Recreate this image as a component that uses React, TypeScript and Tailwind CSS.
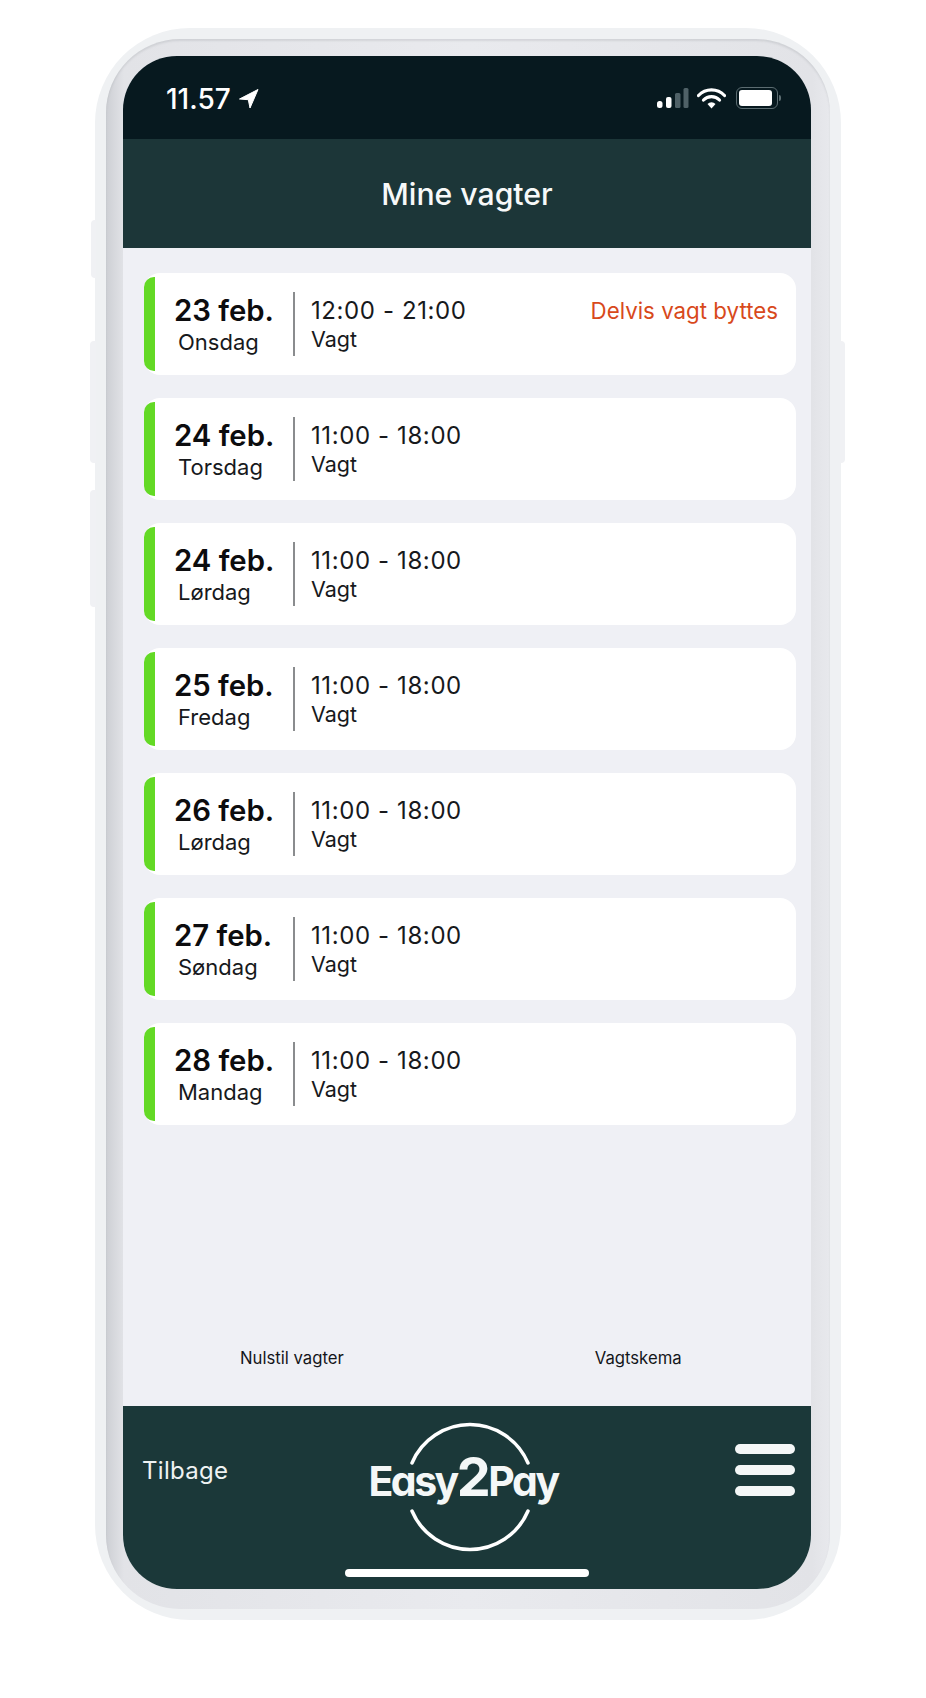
type Shift = {
  date: string;
  day: string;
  time: string;
  note?: string;
};

const shifts: Shift[] = [
  { date: "23 feb.", day: "Onsdag", time: "12:00 - 21:00", note: "Delvis vagt byttes" },
  { date: "24 feb.", day: "Torsdag", time: "11:00 - 18:00" },
  { date: "24 feb.", day: "Lørdag", time: "11:00 - 18:00" },
  { date: "25 feb.", day: "Fredag", time: "11:00 - 18:00" },
  { date: "26 feb.", day: "Lørdag", time: "11:00 - 18:00" },
  { date: "27 feb.", day: "Søndag", time: "11:00 - 18:00" },
  { date: "28 feb.", day: "Mandag", time: "11:00 - 18:00" }
];

function StatusIcons() {
  return (
    <div className="mt-[4px] flex items-center">
      <svg width="32" height="20" viewBox="0 0 32 20" aria-hidden="true">
        <rect x="0" y="13" width="5.5" height="7" rx="2.5" fill="#ffffff" />
        <rect x="9" y="9" width="5.5" height="11" rx="2" fill="#ffffff" />
        <rect x="18" y="5" width="5.5" height="15" rx="1.5" fill="#4f6167" />
        <rect x="26.5" y="0" width="5" height="20" rx="1.5" fill="#4f6167" />
      </svg>
      <svg className="ml-[8px]" width="29" height="21" viewBox="0 0 29 21" aria-hidden="true">
        <path d="M1.5 7.5 a18 18 0 0 1 26 0" fill="none" stroke="#ffffff" strokeWidth="3.2" strokeLinecap="round" />
        <path d="M6.5 12 a11 11 0 0 1 16 0" fill="none" stroke="#ffffff" strokeWidth="3.2" strokeLinecap="round" />
        <path d="M10.5 16 a5.5 5.5 0 0 1 8 0 L14.5 20.5 Z" fill="#ffffff" />
      </svg>
      <div className="ml-[10px] flex items-center">
        <div className="flex h-[22px] w-[42px] items-center rounded-[6px] border-[1.5px] border-[#5c6d72] p-[2px]">
          <div className="h-full w-[33px] rounded-[3px] bg-white" />
        </div>
        <div className="ml-[1px] h-[6px] w-[2px] rounded-r-sm bg-[#5c6d72]" />
      </div>
    </div>
  );
}

function ShiftCard({ shift }: { shift: Shift }) {
  return (
    <div className="flex h-[102px] items-center rounded-[16px] bg-white">
      <div className="h-[94px] w-[11px] rounded-l-[10px] bg-[#63d925]" />
      <div className="w-[138px] pl-[19px]">
        <div className="text-[29.3px] leading-[36px] font-semibold text-[#0c0c0e]">{shift.date}</div>
        <div className="pl-[4px] text-[22px] leading-[26px] text-[#17191c]">{shift.day}</div>
      </div>
      <div className="h-[64px] w-[2px] bg-[#8a8c8e]" />
      <div className="flex-1 self-start pt-[23px] pl-[16px]">
        <div className="text-[24px] leading-[29px] tracking-[0.6px] text-[#17191c]">{shift.time}</div>
        <div className="text-[21.5px] leading-[28px] text-[#17191c]">Vagt</div>
      </div>
      {shift.note ? (
        <div className="self-start pt-[23px] pr-[18px] text-[22.3px] leading-[30px] text-[#d8491b]">
          {shift.note}
        </div>
      ) : null}
    </div>
  );
}

function Logo() {
  return (
    <div className="relative h-[130px] w-[190px]">
      <svg className="absolute inset-0" width="190" height="130" viewBox="0 0 190 130" aria-hidden="true">
        <path d="M37 41 A63 63 0 0 1 153 41" fill="none" stroke="#ffffff" strokeWidth="3.5" strokeLinecap="round" />
        <path d="M37 89 A63 63 0 0 0 153 89" fill="none" stroke="#ffffff" strokeWidth="3.5" strokeLinecap="round" />
      </svg>
      <div className="absolute inset-x-0 top-[25px] flex items-baseline justify-center pr-[14px] text-[#f4f7f7] [font-feature-settings:'cv11'] font-bold tracking-[-2.5px] whitespace-nowrap">
        <span className="text-[41px] leading-[60px]">Easy</span>
        <span className="text-[54px] leading-[60px]">2</span>
        <span className="text-[41px] leading-[60px]">Pay</span>
      </div>
    </div>
  );
}

export default function App() {
  return (
    <div className="relative min-h-[1698px] w-[926px] bg-white pt-[28px] pl-[95px] font-['Inter',sans-serif]">
      {/* side buttons */}
      <div className="absolute top-[220px] left-[91px] h-[58px] w-[5px] rounded-l-sm bg-[#f0f1f4]" />
      <div className="absolute top-[341px] left-[90px] h-[122px] w-[6px] rounded-l-sm bg-[#f0f1f4]" />
      <div className="absolute top-[490px] left-[90px] h-[117px] w-[6px] rounded-l-sm bg-[#f0f1f4]" />
      <div className="absolute top-[341px] left-[840px] h-[122px] w-[5px] rounded-r-sm bg-[#f0f1f4]" />

      <div className="h-[1592px] w-[746px] rounded-[95px] bg-[#eff1f3] p-[11px]">
        <div className="h-full w-full rounded-[74px] bg-[linear-gradient(90deg,#cdcfd4_0,#e2e3e7_18px,#e9eaee_50%,#e2e3e7_calc(100%-18px),#e8e9ed_100%)] pt-[17px] pr-[19px] pb-[20px] pl-[17px] shadow-[inset_0_2px_2px_rgba(120,125,135,0.18)]">
          <div className="flex h-full w-full flex-col overflow-hidden rounded-[54px] bg-[#eff0f5]">
            <div className="flex h-[83px] items-start justify-between bg-[#07191f] pt-[27px] pr-[30px] pl-[43px]">
              <div className="flex items-center">
                <span className="text-[28px] leading-[32px] font-medium text-white">11.57</span>
                <svg className="ml-[8px]" width="20" height="20" viewBox="0 0 20 20" aria-hidden="true">
                  <path d="M19 0.5 L0.5 10 L9.3 10.7 L11 19 Z" fill="#ffffff" stroke="#ffffff" strokeLinejoin="round" />
                </svg>
              </div>
              <StatusIcons />
            </div>

            <div className="flex h-[109px] items-center justify-center bg-[#1c3638]">
              <h1 className="text-[30.2px] leading-[40px] font-medium text-[#f7f9f9]">Mine vagter</h1>
            </div>

            <div className="flex flex-1 flex-col pt-[25px] pr-[15px] pl-[21px]">
              <div className="flex flex-col gap-[23px]">
                {shifts.map((shift) => (
                  <ShiftCard key={shift.date + shift.day} shift={shift} />
                ))}
              </div>
              <div className="mt-auto flex pb-[36px] text-[16.7px] leading-[24px] text-[#14161a]">
                <span className="ml-[96px]">Nulstil vagter</span>
                <span className="ml-[251px]">Vagtskema</span>
              </div>
            </div>

            <div className="relative flex h-[183px] items-start bg-[#1b3839] pr-[16px] pl-[19px]">
              <div className="mt-[49px] w-[233px]">
                <span className="text-[24px] leading-[32px] tracking-[0.3px] text-[#eef2f2]">Tilbage</span>
              </div>
              <div className="mt-[16px]">
                <Logo />
              </div>
              <div className="mt-[38px] ml-auto flex w-[60px] flex-col gap-[11px]">
                <div className="h-[10px] rounded-full bg-[#f4f7f7]" />
                <div className="h-[10px] rounded-full bg-[#f4f7f7]" />
                <div className="h-[10px] rounded-full bg-[#f4f7f7]" />
              </div>
              <div className="absolute bottom-[12px] left-[222px] h-[8px] w-[244px] rounded-full bg-white" />
            </div>
          </div>
        </div>
      </div>
    </div>
  );
}
